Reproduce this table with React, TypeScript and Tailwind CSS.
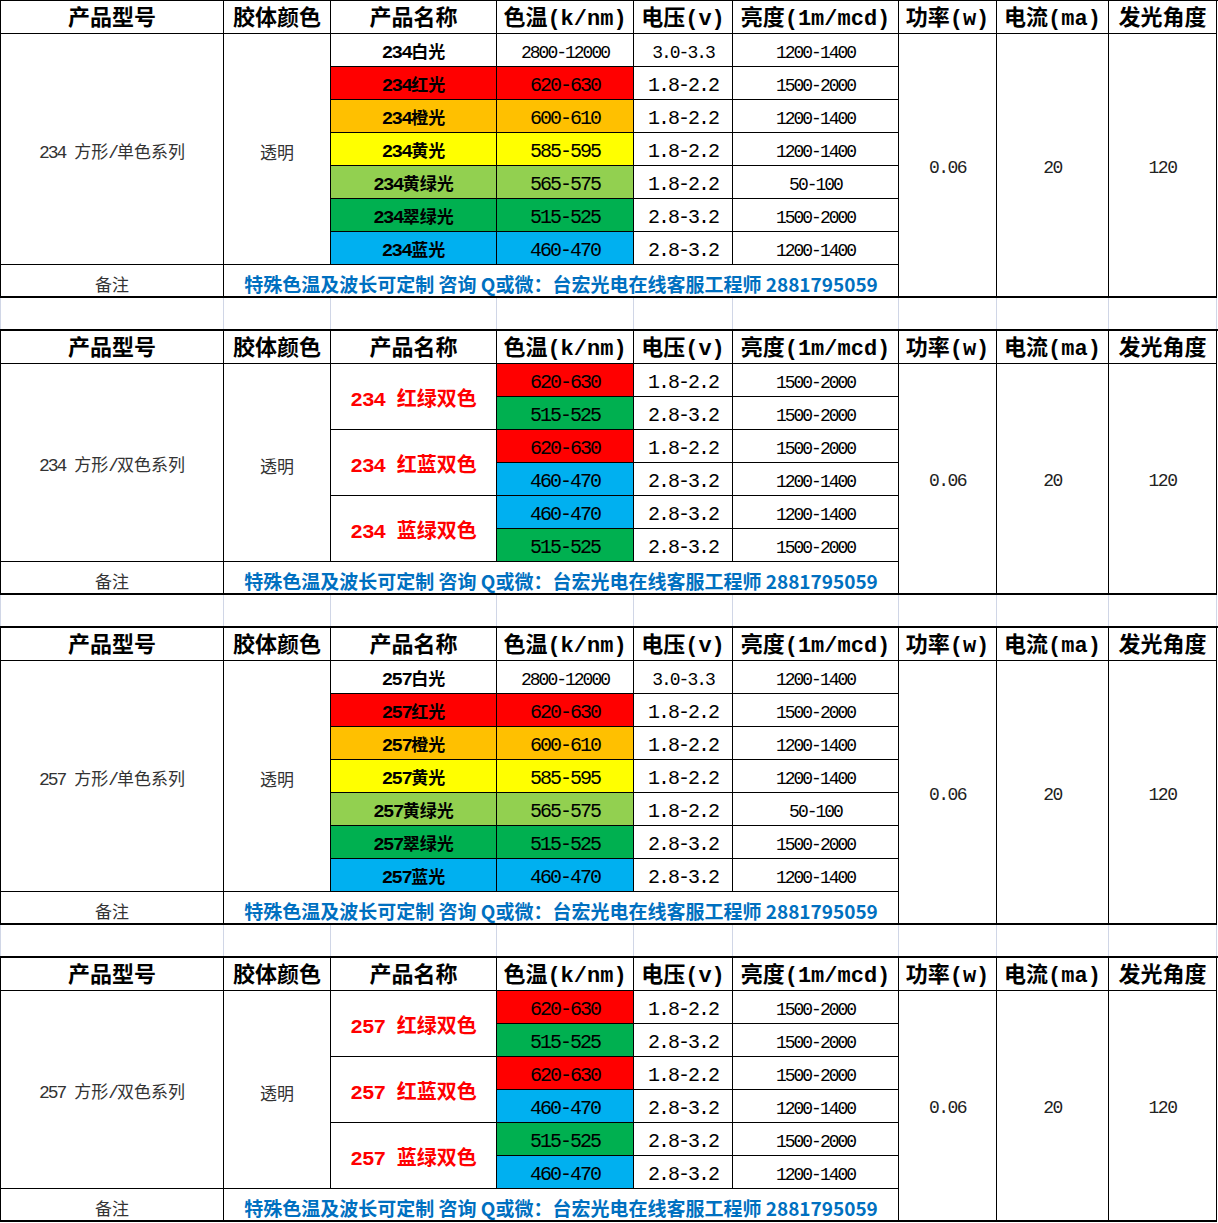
import React from "react";

// 规格表：四个表块，中间隔一行空白网格
const COLS = "grid-cols-[223px_107px_166px_137px_99px_166px_98px_112px_108px]";
const MONO = "font-['Liberation_Mono','Noto_Sans_CJK_SC',monospace]";
const SANS = "font-['Noto_Sans_CJK_SC','Liberation_Sans',sans-serif]";
const cell =
  "flex items-center justify-center border-r border-b border-black leading-none whitespace-pre pt-[5px]";

const RED = "bg-[#ff0000]";
const ORANGE = "bg-[#ffc000]";
const YELLOW = "bg-[#ffff00]";
const LIME = "bg-[#92d050]";
const GREEN = "bg-[#00b050]";
const BLUE = "bg-[#00b0f0]";

const BIG_NUM = `${MONO} text-[20px] tracking-[-2px] text-black`;
const SMALL_NUM = `${MONO} text-[18px] tracking-[-2px] text-black`;

const headers = [
  "产品型号",
  "胶体颜色",
  "产品名称",
  "色温(k/nm)",
  "电压(v)",
  "亮度(1m/mcd)",
  "功率(w)",
  "电流(ma)",
  "发光角度",
];

type Row = { fill: string; temp: string; volt: string; bright: string };
type SingleRow = Row & { name: string };
type Pair = { name: string; rows: Row[] };

const singleRows = (m: string): SingleRow[] => [
  { name: `${m}白光`, fill: "bg-white", temp: "2800-12000", volt: "3.0-3.3", bright: "1200-1400" },
  { name: `${m}红光`, fill: RED, temp: "620-630", volt: "1.8-2.2", bright: "1500-2000" },
  { name: `${m}橙光`, fill: ORANGE, temp: "600-610", volt: "1.8-2.2", bright: "1200-1400" },
  { name: `${m}黄光`, fill: YELLOW, temp: "585-595", volt: "1.8-2.2", bright: "1200-1400" },
  { name: `${m}黄绿光`, fill: LIME, temp: "565-575", volt: "1.8-2.2", bright: "50-100" },
  { name: `${m}翠绿光`, fill: GREEN, temp: "515-525", volt: "2.8-3.2", bright: "1500-2000" },
  { name: `${m}蓝光`, fill: BLUE, temp: "460-470", volt: "2.8-3.2", bright: "1200-1400" },
];

const red: Row = { fill: RED, temp: "620-630", volt: "1.8-2.2", bright: "1500-2000" };
const green: Row = { fill: GREEN, temp: "515-525", volt: "2.8-3.2", bright: "1500-2000" };
const blue: Row = { fill: BLUE, temp: "460-470", volt: "2.8-3.2", bright: "1200-1400" };

const pairs = (m: string, lastGreenFirst: boolean): Pair[] => [
  { name: `${m} 红绿双色`, rows: [red, green] },
  { name: `${m} 红蓝双色`, rows: [red, blue] },
  { name: `${m} 蓝绿双色`, rows: lastGreenFirst ? [green, blue] : [blue, green] },
];

const NOTE = "特殊色温及波长可定制 咨询 Q或微：台宏光电在线客服工程师 2881795059";

// latin runs get the mono face, CJK keeps the cell's own font; one inline box so baselines line up
const Mixed = ({ text, latin }: { text: string; latin: string }) => (
  <span>
    {text
      .split(/([\x20-\x7e]+)/)
      .filter(Boolean)
      .map((part, i) =>
        /^[\x20-\x7e]+$/.test(part) ? (
          <span key={i} className={latin}>
            {part}
          </span>
        ) : (
          <span key={i}>{part}</span>
        )
      )}
  </span>
);

const Header = () => (
  <>
    {headers.map((h) => (
      <div key={h} className={`${cell} ${MONO} text-[22px] font-bold text-black`}>
        {h}
      </div>
    ))}
  </>
);

const Values = ({ row, small }: { row: Row; small?: boolean }) => (
  <>
    <div className={`${cell} ${row.fill} ${small ? SMALL_NUM : BIG_NUM}`}>{row.temp}</div>
    <div className={`${cell} ${small ? SMALL_NUM : BIG_NUM}`}>{row.volt}</div>
    <div className={`${cell} ${SMALL_NUM}`}>{row.bright}</div>
  </>
);

const Footer = () => (
  <>
    <div className={`${cell} ${SANS} border-b-2 text-[17px] text-[#333]`}>备注</div>
    <div className={`${cell} ${SANS} col-span-5 border-b-2 text-[19px] font-bold text-[#0070c0]`}>
      {NOTE}
    </div>
  </>
);

const RightCols = ({ span }: { span: string }) => (
  <>
    {["0.06", "20", "120"].map((v) => (
      <div key={v} className={`${cell} ${span} border-b-2 ${MONO} text-[18px] tracking-[-1.5px] text-[#222]`}>
        {v}
      </div>
    ))}
  </>
);

const Series = ({ text, span }: { text: string; span: string }) => (
  <div className={`${cell} ${span} ${SANS} text-[17px] text-[#333]`}>
    <Mixed text={text} latin={`${MONO} text-[18px] tracking-[-2px]`} />
  </div>
);

const SingleTable = ({ model, first }: { model: string; first?: boolean }) => {
  const rows = singleRows(model);
  return (
    <div className={`grid ${COLS} auto-rows-[33px] border-l border-black ${first ? "border-t" : "border-t-2"}`}>
      <Header />
      <Series text={`${model} 方形/单色系列`} span="row-span-7" />
      <Series text="透明" span="row-span-7" />
      {rows.map((r, i) => (
        <React.Fragment key={r.name}>
          <div className={`${cell} ${r.fill} ${SANS} text-[17px] font-bold text-black`}>
            <Mixed text={r.name} latin={`${MONO} text-[19px] tracking-[-1.5px]`} />
          </div>
          <Values row={r} small={i === 0} />
          {i === 0 && <RightCols span="row-span-8" />}
        </React.Fragment>
      ))}
      <Footer />
    </div>
  );
};

const DualTable = ({ model, greenFirst }: { model: string; greenFirst?: boolean }) => {
  const groups = pairs(model, !!greenFirst);
  return (
    <div className={`grid ${COLS} auto-rows-[33px] border-l border-t-2 border-black`}>
      <Header />
      <Series text={`${model} 方形/双色系列`} span="row-span-6" />
      <Series text="透明" span="row-span-6" />
      {groups.map((g, gi) => (
        <React.Fragment key={g.name}>
          <div className={`${cell} row-span-2 ${SANS} text-[20px] font-bold text-[#ff0000]`}>
            <Mixed text={g.name} latin={`${MONO} text-[21px] tracking-[-1px]`} />
          </div>
          <Values row={g.rows[0]} />
          {gi === 0 && <RightCols span="row-span-7" />}
          <Values row={g.rows[1]} />
        </React.Fragment>
      ))}
      <Footer />
    </div>
  );
};

const Spacer = () => (
  <div className={`grid ${COLS} h-[31px] border-l border-[#d0d6e6]`}>
    {headers.map((h) => (
      <div key={h} className="border-r border-[#d0d6e6]" />
    ))}
  </div>
);

export default function App() {
  return (
    <div className="w-[1218px] bg-white">
      <SingleTable model="234" first />
      <Spacer />
      <DualTable model="234" />
      <Spacer />
      <SingleTable model="257" />
      <Spacer />
      <DualTable model="257" greenFirst />
    </div>
  );
}
